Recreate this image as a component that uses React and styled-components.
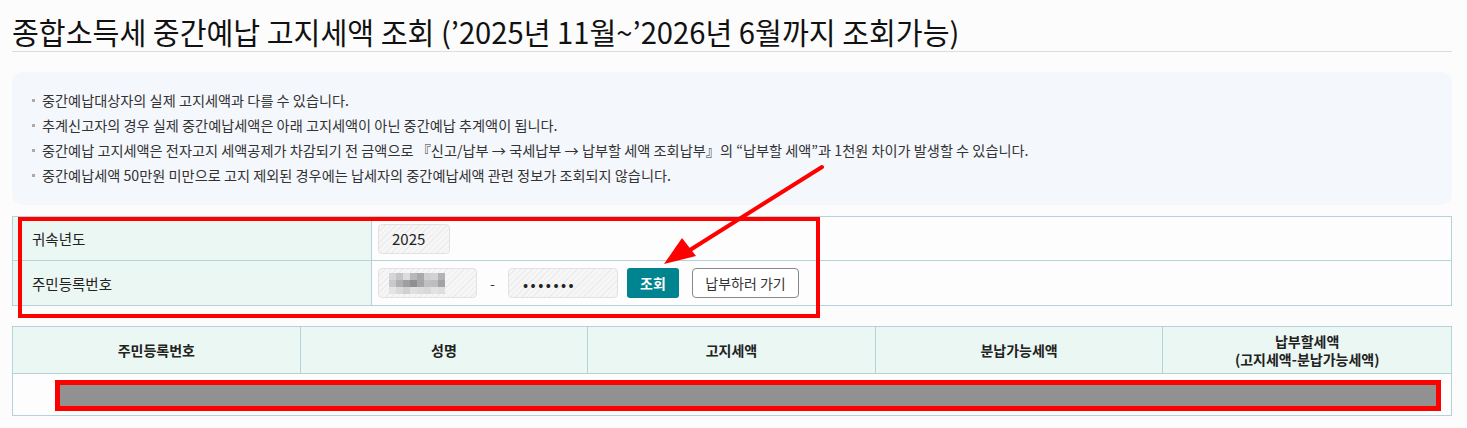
import React from 'react';
import styled, { createGlobalStyle, css } from 'styled-components';

const GlobalStyle = createGlobalStyle`
  body {
    margin: 0;
    background: #fcfcfc;
    font-family: "Noto Sans CJK KR", "Noto Sans", sans-serif;
    color: #222;
  }
`;

const Page = styled.div`
  position: relative;
  width: 1467px;
  height: 428px;
  padding: 0 15px 0 12px;
  box-sizing: border-box;
  overflow: hidden;
`;

const Title = styled.h1`
  margin: 0;
  padding-top: 11px;
  height: 40px;
  font-size: 29.2px;
  font-weight: 400;
  line-height: 40px;
  color: #111;
  white-space: nowrap;
  border-bottom: 1px solid #ddd;
`;

const InfoBox = styled.ul`
  margin: 20px 0 0;
  padding: 16px 0 0 20px;
  height: 133px;
  box-sizing: border-box;
  list-style: none;
  background: #f4f7fc;
  border-radius: 10px;
`;

const InfoItem = styled.li`
  position: relative;
  padding-left: 10px;
  font-size: 14.2px;
  line-height: 25px;
  color: #333;
  white-space: nowrap;
  &::before {
    content: '';
    position: absolute;
    left: 0;
    top: 11px;
    width: 3px;
    height: 3px;
    background: #aaa;
  }
`;

const borderColor = '#b3d3d8';

const FormTable = styled.div`
  margin-top: 11px;
  display: grid;
  grid-template-columns: 359px 1fr;
  border: 1px solid ${borderColor};
`;

const cellBase = css`
  height: 44px;
  box-sizing: border-box;
  display: flex;
  align-items: center;
  font-size: 14.5px;
  border-bottom: ${p => (p.$last ? 'none' : `1px solid ${borderColor}`)};
`;

const LabelCell = styled.div`
  ${cellBase}
  padding-left: 19px;
  background: #ebf7f3;
  border-right: 1px solid ${borderColor};
  color: #222;
`;

const ValueCell = styled.div`
  ${cellBase}
  padding-left: 6px;
  gap: 8px;
  background: #fdfdfd;
`;

const hatch = css`
  background: repeating-linear-gradient(135deg, #ececec 0 1px, #f6f6f6 1px 4px);
  border: 1px solid #e2e2e2;
  border-radius: 4px;
  box-sizing: border-box;
  height: 30px;
`;

const ReadOnlyBox = styled.div`
  ${hatch}
  width: ${p => p.$w}px;
  display: flex;
  align-items: center;
  padding-left: ${p => p.$pad ?? 13}px;
  font-size: 15px;
  color: #222;
  letter-spacing: ${p => p.$spacing ?? 0}px;
`;

const Mosaic = styled.div`
  display: grid;
  grid-template-columns: repeat(8, 7px);
  grid-auto-rows: 7px;
  margin-left: -2px;
`;

const Tile = styled.span`
  background: ${p => p.$c};
`;

const Dash = styled.span`
  width: 15px;
  text-align: center;
  font-size: 14px;
  color: #333;
`;

const PrimaryButton = styled.button`
  height: 30px;
  width: 52px;
  border: none;
  border-radius: 3px;
  background: #00848f;
  color: #fff;
  font-family: inherit;
  font-size: 14px;
  font-weight: 600;
  margin-left: 1px;
`;

const OutlineButton = styled.button`
  height: 30px;
  width: 107px;
  margin-left: 5px;
  border: 1px solid #888;
  border-radius: 4px;
  background: #fff;
  color: #333;
  font-family: inherit;
  font-size: 14px;
`;

const ResultTable = styled.div`
  margin-top: 20px;
  border: 1px solid ${borderColor};
  display: grid;
  grid-template-columns: repeat(5, 1fr);
`;

const HeadCell = styled.div`
  height: 46px;
  display: flex;
  align-items: center;
  justify-content: center;
  text-align: center;
  font-size: 14px;
  font-weight: 600;
  line-height: 18px;
  white-space: pre-line;
  background: #ebf7f3;
  border-bottom: 1px solid ${borderColor};
  border-right: ${p => (p.$last ? 'none' : `1px solid ${borderColor}`)};
`;

const BodyRow = styled.div`
  grid-column: 1 / -1;
  height: 41px;
  background: #fdfdfd;
  padding: 6px 10px 0 42px;
  box-sizing: border-box;
`;

const RedactBar = styled.div`
  height: 31px;
  box-sizing: border-box;
  border: 5px solid #ff0000;
  background: #919191;
`;

const Highlight = styled.div`
  position: absolute;
  left: 18px;
  top: 217px;
  width: 802px;
  height: 101px;
  box-sizing: border-box;
  border: 4px solid #ff0000;
  pointer-events: none;
`;

const ArrowLayer = styled.svg`
  position: absolute;
  left: 0;
  top: 0;
  pointer-events: none;
`;

const notes = [
  '중간예납대상자의 실제 고지세액과 다를 수 있습니다.',
  '추계신고자의 경우 실제 중간예납세액은 아래 고지세액이 아닌 중간예납 추계액이 됩니다.',
  '중간예납 고지세액은 전자고지 세액공제가 차감되기 전 금액으로 『신고/납부 → 국세납부 → 납부할 세액 조회납부』의 “납부할 세액”과 1천원 차이가 발생할 수 있습니다.',
  '중간예납세액 50만원 미만으로 고지 제외된 경우에는 납세자의 중간예납세액 관련 정보가 조회되지 않습니다.',
];

const mosaic = [
  '#d6d6d8', '#c4c4c6', '#dcdcde', '#b8b8ba', '#a9a9ab', '#cfcfd1', '#d3d3d5', '#b3b3b5',
  '#c9c9cb', '#b0b0b2', '#9f9fa1', '#8f8f91', '#a6a6a8', '#c0c0c2', '#bdbdbf', '#a3a3a5',
  '#e4e4e6', '#dadadc', '#d0d0d2', '#e0e0e2', '#dcdcde', '#d8d8da', '#e2e2e4', '#dedee0',
];

const headers = ['주민등록번호', '성명', '고지세액', '분납가능세액', '납부할세액\n(고지세액-분납가능세액)'];

export default function App() {
  return (
    <>
      <GlobalStyle />
      <Page>
        <Title>종합소득세 중간예납 고지세액 조회 (’2025년 11월~’2026년 6월까지 조회가능)</Title>

        <InfoBox>
          {notes.map(n => (
            <InfoItem key={n}>{n}</InfoItem>
          ))}
        </InfoBox>

        <FormTable>
          <LabelCell>귀속년도</LabelCell>
          <ValueCell>
            <ReadOnlyBox $w={72}>2025</ReadOnlyBox>
          </ValueCell>
          <LabelCell $last>주민등록번호</LabelCell>
          <ValueCell $last>
            <ReadOnlyBox $w={99} $pad={12}>
              <Mosaic>
                {mosaic.map((c, i) => (
                  <Tile key={i} $c={c} />
                ))}
              </Mosaic>
            </ReadOnlyBox>
            <Dash>-</Dash>
            <ReadOnlyBox $w={110} $pad={14} $spacing={2.5}>•••••••</ReadOnlyBox>
            <PrimaryButton>조회</PrimaryButton>
            <OutlineButton>납부하러 가기</OutlineButton>
          </ValueCell>
        </FormTable>

        <ResultTable>
          {headers.map((h, i) => (
            <HeadCell key={h} $last={i === headers.length - 1}>
              {h}
            </HeadCell>
          ))}
          <BodyRow>
            <RedactBar />
          </BodyRow>
        </ResultTable>

        <Highlight />
        <ArrowLayer width="1467" height="428" viewBox="0 0 1467 428">
          <line x1="822" y1="167" x2="690" y2="250" stroke="#ff0000" strokeWidth="4" strokeLinecap="round" />
          <polygon points="664,264 682,238 696,256" fill="#ff0000" />
        </ArrowLayer>
      </Page>
    </>
  );
}
